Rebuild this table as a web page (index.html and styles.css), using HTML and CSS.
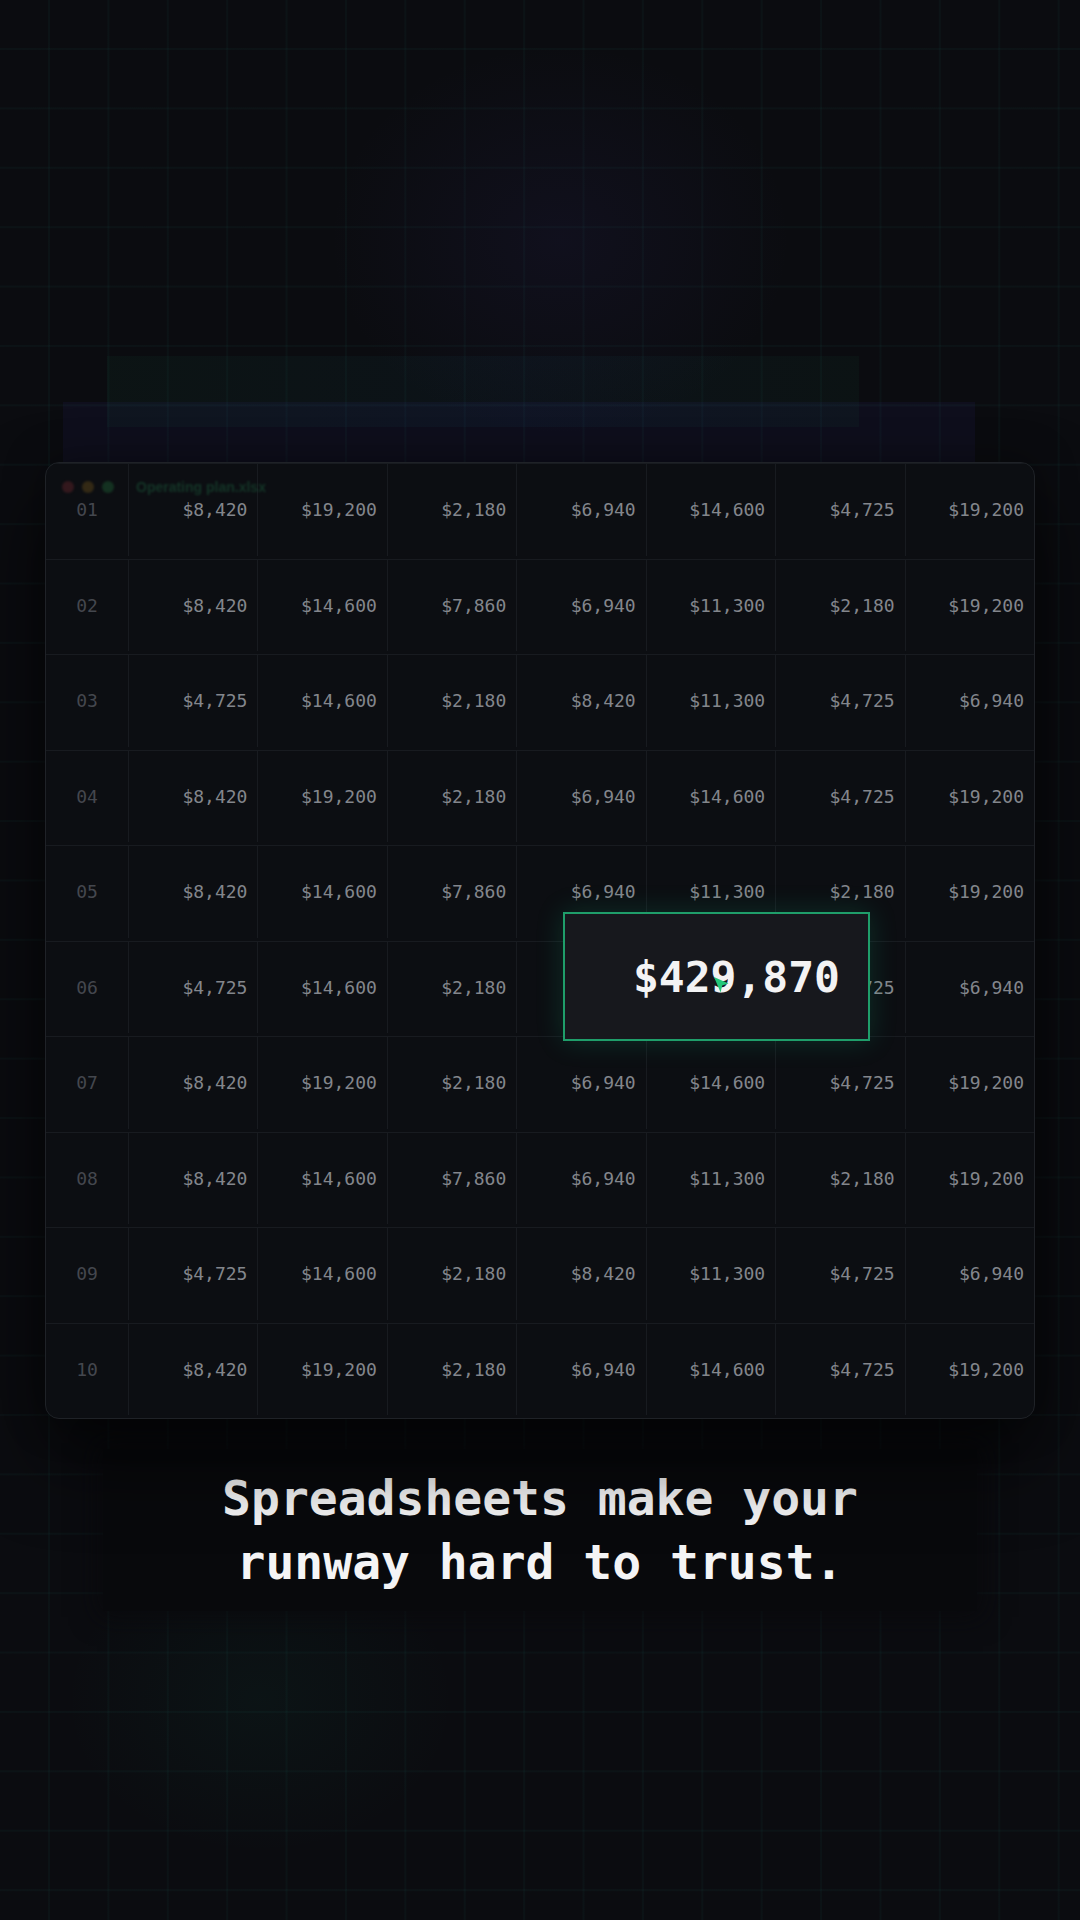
FILE: index.html
```html
<!DOCTYPE html>
<html lang="en">
<head>
  <meta charset="UTF-8">
  <title>Runway</title>
  <link rel="stylesheet" href="styles.css">
</head>
<body>
  <div class="scene">
    <div class="deck-back"></div>
    <div class="deck-mid"></div>

    <div class="sheet">
      <div class="chrome">
        <span class="dot red"></span>
        <span class="dot amber"></span>
        <span class="dot green"></span>
        <span class="file">Operating plan.xlsx</span>
      </div>

      <div class="row"><div class="idx">01</div><div class="cell">$8,420</div><div class="cell">$19,200</div><div class="cell">$2,180</div><div class="cell">$6,940</div><div class="cell">$14,600</div><div class="cell">$4,725</div><div class="cell">$19,200</div></div>
      <div class="row"><div class="idx">02</div><div class="cell">$8,420</div><div class="cell">$14,600</div><div class="cell">$7,860</div><div class="cell">$6,940</div><div class="cell">$11,300</div><div class="cell">$2,180</div><div class="cell">$19,200</div></div>
      <div class="row"><div class="idx">03</div><div class="cell">$4,725</div><div class="cell">$14,600</div><div class="cell">$2,180</div><div class="cell">$8,420</div><div class="cell">$11,300</div><div class="cell">$4,725</div><div class="cell">$6,940</div></div>
      <div class="row"><div class="idx">04</div><div class="cell">$8,420</div><div class="cell">$19,200</div><div class="cell">$2,180</div><div class="cell">$6,940</div><div class="cell">$14,600</div><div class="cell">$4,725</div><div class="cell">$19,200</div></div>
      <div class="row"><div class="idx">05</div><div class="cell">$8,420</div><div class="cell">$14,600</div><div class="cell">$7,860</div><div class="cell">$6,940</div><div class="cell">$11,300</div><div class="cell">$2,180</div><div class="cell">$19,200</div></div>
      <div class="row"><div class="idx">06</div><div class="cell">$4,725</div><div class="cell">$14,600</div><div class="cell">$2,180</div><div class="cell">$8,420</div><div class="cell">$11,300</div><div class="cell">$4,725</div><div class="cell">$6,940</div></div>
      <div class="row"><div class="idx">07</div><div class="cell">$8,420</div><div class="cell">$19,200</div><div class="cell">$2,180</div><div class="cell">$6,940</div><div class="cell">$14,600</div><div class="cell">$4,725</div><div class="cell">$19,200</div></div>
      <div class="row"><div class="idx">08</div><div class="cell">$8,420</div><div class="cell">$14,600</div><div class="cell">$7,860</div><div class="cell">$6,940</div><div class="cell">$11,300</div><div class="cell">$2,180</div><div class="cell">$19,200</div></div>
      <div class="row"><div class="idx">09</div><div class="cell">$4,725</div><div class="cell">$14,600</div><div class="cell">$2,180</div><div class="cell">$8,420</div><div class="cell">$11,300</div><div class="cell">$4,725</div><div class="cell">$6,940</div></div>
      <div class="row"><div class="idx">10</div><div class="cell">$8,420</div><div class="cell">$19,200</div><div class="cell">$2,180</div><div class="cell">$6,940</div><div class="cell">$14,600</div><div class="cell">$4,725</div><div class="cell">$19,200</div></div>

      <!-- the one total that is supposed to hold it all together -->
      <div class="total">
        <span class="total-value">$429,870</span>
        <svg class="pointer" width="17" height="18" viewBox="0 0 17 18">
          <path d="M1 1 L15.5 7.5 L9.2 9.6 L7.6 16.5 Z" fill="#22c77a"/>
        </svg>
      </div>
    </div>

    <div class="caption">
      Spreadsheets make your<br>
      runway hard to trust.
    </div>
  </div>
</body>
</html>
```

FILE: styles.css
```css
body {
  margin: 0;
  padding: 0;
  width: 1080px;
  height: 1920px;
  overflow: hidden;
  background-color: #0b0c10;
  background-image:
    radial-gradient(ellipse 330px 280px at 560px 240px, rgba(70, 55, 160, 0.09), transparent 70%),
    radial-gradient(ellipse 280px 220px at 260px 1700px, rgba(20, 160, 120, 0.05), transparent 70%),
    linear-gradient(to right, rgba(40, 190, 170, 0.04) 2px, transparent 2px),
    linear-gradient(to bottom, rgba(40, 190, 170, 0.04) 2px, transparent 2px);
  background-size: auto, auto, 59.4px 59.4px, 59.4px 59.4px;
  background-position: 0 0, 0 0, 48px 48px, 48px 48px;
  font-family: "DejaVu Sans Mono", "Liberation Mono", monospace;
}

.scene {
  padding-top: 356px;
}

/* faded cards stacked behind the sheet */
.deck-back {
  height: 71px;
  margin: 0 221px 0 107px;
  background: linear-gradient(to right, rgba(20, 110, 70, 0.08), rgba(25, 100, 130, 0.07) 55%, rgba(20, 110, 70, 0.07));
}
.deck-mid {
  height: 60px;
  margin: -25px 105px 0 63px;
  background: rgba(60, 45, 150, 0.10);
}

.sheet {
  position: relative;
  margin: 0 45px;
  height: 957px;
  box-sizing: border-box;
  display: grid;
  grid-template-rows: repeat(10, 1fr);
  background: #0c0e12;
  border: 1px solid #1f2227;
  border-radius: 14px;
  overflow: hidden;
  box-shadow: 0 40px 80px rgba(0, 0, 0, 0.6), 0 0 40px rgba(0, 0, 0, 0.35);
}

.chrome {
  position: absolute;
  top: 16px;
  left: 16px;
  display: flex;
  align-items: center;
  gap: 8px;
  opacity: 0.5;
  filter: blur(0.8px);
}
.dot {
  width: 12px;
  height: 12px;
  border-radius: 50%;
}
.dot.red { background: #5a2228; }
.dot.amber { background: #5a4418; }
.dot.green { background: #1c5530; }
.file {
  margin-left: 14px;
  font-family: "Liberation Sans", Arial, sans-serif;
  font-size: 14px;
  font-weight: 700;
  color: #1c5c3c;
}

.row {
  display: grid;
  grid-template-columns: 82px repeat(7, 1fr);
  border-top: 1px solid #181b20;
  padding-bottom: 3px;
}
.row:first-of-type {
  border-top: none;
}

.idx, .cell {
  display: flex;
  align-items: center;
  font-size: 18px;
}
.idx {
  justify-content: center;
  color: #44474e;
}
.cell {
  justify-content: flex-end;
  padding-right: 10px;
  border-left: 1px solid #181b20;
  color: #83868c;
}

.total {
  position: absolute;
  left: 517px;
  top: 449px;
  width: 307px;
  height: 129px;
  box-sizing: border-box;
  display: flex;
  align-items: center;
  justify-content: flex-end;
  padding-right: 28px;
  background: #17181d;
  border: 2px solid #1f9e6a;
  box-shadow: 0 0 26px rgba(16, 185, 129, 0.2);
}
.total-value {
  font-size: 43px;
  font-weight: 700;
  color: #f3f3f4;
}
.pointer {
  position: absolute;
  left: 148px;
  top: 62px;
}

.caption {
  margin: 30px 103px 0;
  padding: 17px 0;
  background: #08090c;
  box-shadow: 0 0 24px 6px rgba(8, 9, 12, 0.7);
  text-align: center;
  font-size: 48px;
  font-weight: 700;
  line-height: 64px;
  color: #f4f4f5;
}
```
